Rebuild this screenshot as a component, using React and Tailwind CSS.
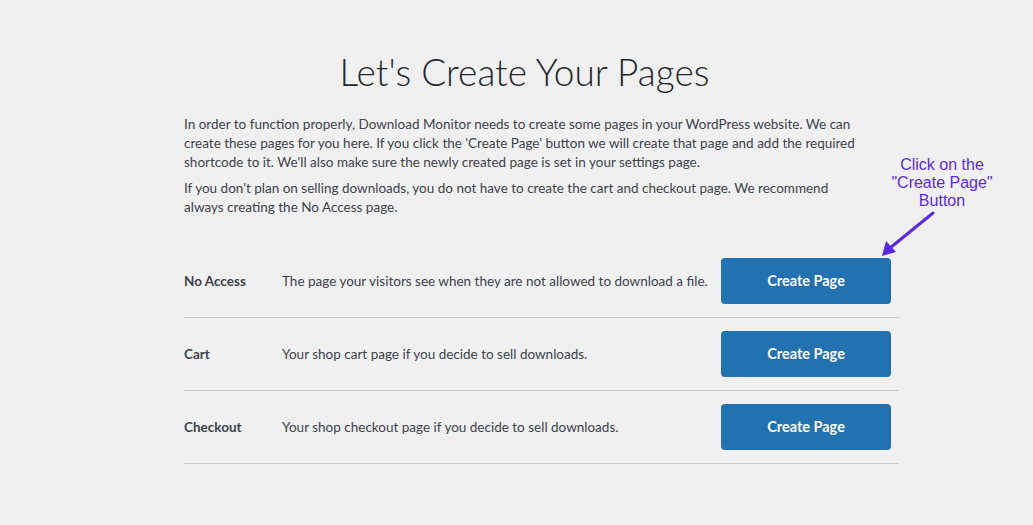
import React from "react";

const rows = [
  { label: "No Access", desc: "The page your visitors see when they are not allowed to download a file." },
  { label: "Cart", desc: "Your shop cart page if you decide to sell downloads." },
  { label: "Checkout", desc: "Your shop checkout page if you decide to sell downloads." },
];

export default function App() {
  return (
    <div className="relative h-[525px] w-full overflow-hidden bg-[#f0f0f1] font-['Lato','Noto_Sans',sans-serif]">
      <div className="ml-[184px] w-[715px] pt-[49px]">
        <h1 className="pr-[34px] text-center text-[37px] font-light leading-[46px] text-[#23282d]">
          Let's Create Your Pages
        </h1>

        <div className="mt-[20px] w-[715px] whitespace-nowrap text-[13.5px] leading-[19px] text-[#3c434a]">
          <p>
            In order to function properly, Download Monitor needs to create some pages in your WordPress website. We can
            <br />
            create these pages for you here. If you click the 'Create Page' button we will create that page and add the required
            <br />
            shortcode to it. We'll also make sure the newly created page is set in your settings page.
          </p>
          <p className="mt-[7px]">
            If you don't plan on selling downloads, you do not have to create the cart and checkout page. We recommend
            <br />
            always creating the No Access page.
          </p>
        </div>

        <div className="mt-[28px]">
          {rows.map((r) => (
            <div key={r.label} className="flex items-center border-b border-[#cccccc] py-[13px]">
              <div className="w-[98px] text-[13.5px] font-bold text-[#3c434a]">{r.label}</div>
              <div className="flex-1 text-[13.5px] text-[#3c434a]">{r.desc}</div>
              <button className="mr-[8px] h-[46px] w-[170px] rounded-[4px] bg-[#2271b1] text-[14.5px] font-bold text-white">
                Create Page
              </button>
            </div>
          ))}
        </div>
      </div>

      {/* annotation */}
      <div className="absolute left-[872px] top-[156px] w-[140px] text-center font-['Liberation_Sans',Arial,sans-serif] text-[16px] leading-[18px] text-[#5b2be6]">
        Click on the
        <br />
        "Create Page"
        <br />
        Button
      </div>
      <svg className="absolute left-[876px] top-[208px]" width="64" height="54" viewBox="0 0 64 54">
        <line x1="57" y1="5" x2="14" y2="40" stroke="#5a28ea" strokeWidth="3" strokeLinecap="round" />
        <polygon points="6,48 10,33 20,44" fill="#5a28ea" />
      </svg>
    </div>
  );
}
